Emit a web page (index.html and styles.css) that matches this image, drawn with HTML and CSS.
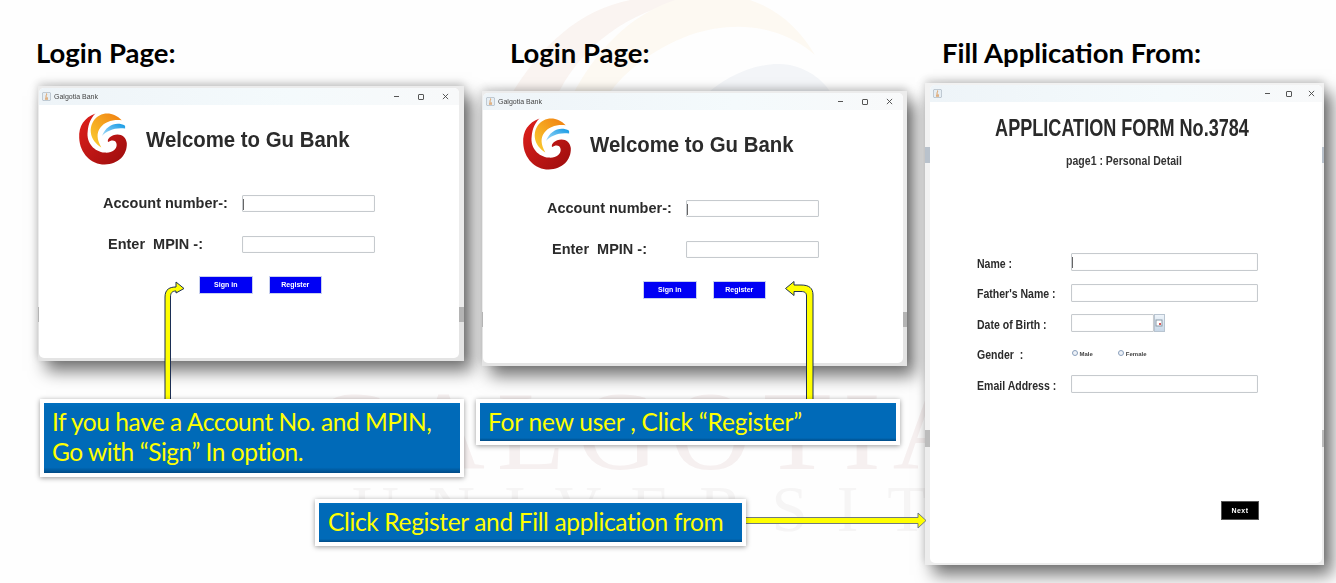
FILE: index.html
```html
<!DOCTYPE html>
<html lang="en">
<head>
<meta charset="utf-8">
<title>Galgotia Bank slide</title>
<link rel="stylesheet" href="styles.css">
</head>
<body>
<main class="slide">
  <svg class="wm-logo" viewBox="0 0 420 120" aria-hidden="true">
    <path d="M8 100C40 45 80 10 130 0L190 0C130 10 80 45 55 100Z" fill="#faf4f1"/>
    <path d="M70 100C95 50 130 15 175 0L250 0C280 10 300 30 315 55C280 25 235 20 190 35C150 50 120 75 105 100Z" fill="#fdf9f2"/>
    <path d="M200 100C225 75 260 60 290 65C310 70 325 80 335 100Z" fill="#f3f5f8"/>
  </svg>
  <div class="wm-text wm-top">GALGOTIAS</div>
  <div class="wm-text wm-bottom">UNIVERSITY</div>

  <h2 class="heading h-a">Login Page:</h2>
  <h2 class="heading h-b">Login Page:</h2>
  <h2 class="heading h-c">Fill Application From:</h2>

  <section class="shot shot-a">
    <div class="win">
      <div class="titlebar">
        <svg class="java" viewBox="0 0 12 12"><rect x=".5" y=".5" width="11" height="11" rx="2" fill="#e6eef4" stroke="#a9b6c0"/><path d="M6 2c1 2-2 3 0 5M4 8h4M4 9.500h4" stroke="#d9822b" fill="none"/></svg>
        <span class="wintitle">Galgotia Bank</span>
        <div class="controls">
          <span class="ctl-min"></span><span class="ctl-max"></span>
          <svg class="ctl-x" viewBox="0 0 8 8"><path d="M1 1l6 6M7 1L1 7" stroke="#444" fill="none"/></svg>
        </div>
      </div>
      <div class="brand">
        <svg class="logo" viewBox="0 0 200 200">
          <defs>
            <linearGradient id="r1" x1="0" y1="0" x2="1" y2="1"><stop offset="0" stop-color="#e0201c"/><stop offset="1" stop-color="#9c0d0d"/></linearGradient>
            <linearGradient id="o1" x1="1" y1="0" x2="0" y2="1"><stop offset="0" stop-color="#f07d10"/><stop offset="1" stop-color="#fbd030"/></linearGradient>
            <linearGradient id="b1" x1="1" y1="0" x2="0" y2="1"><stop offset="0" stop-color="#1298e4"/><stop offset="1" stop-color="#a6dcf8"/></linearGradient>
          </defs>
          <path fill="url(#r1)" d="M78 28C45 40 28 65 30 100C32 145 65 178 105 178C145 178 172 150 170 115C168 95 150 85 130 92C118 97 112 105 115 112C125 105 138 105 140 118C142 135 125 145 105 143C75 140 50 115 55 80C57 58 65 40 78 28Z"/>
          <path fill="url(#o1)" d="M155 48C130 20 90 22 72 50C58 72 60 105 95 128C82 105 80 85 92 70C105 52 130 45 155 48Z"/>
          <path fill="url(#b1)" d="M165 64C140 50 110 62 97 94C112 78 135 68 165 72Z"/>
        </svg>
        <h1 class="welcome">Welcome to Gu Bank</h1>
      </div>
      <div class="login-form">
        <div class="login-row"><label class="login-label">Account number-:</label><div class="field login-field has-caret"></div></div>
        <div class="login-row"><label class="login-label label-mpin">Enter&nbsp; MPIN -:</label><div class="field login-field"></div></div>
        <div class="btn-row"><div class="btn-blue">Sign in</div><div class="btn-blue">Register</div></div>
      </div>
    </div>
  </section>

  <section class="shot shot-b">
    <div class="win">
      <div class="titlebar">
        <svg class="java" viewBox="0 0 12 12"><rect x=".5" y=".5" width="11" height="11" rx="2" fill="#e6eef4" stroke="#a9b6c0"/><path d="M6 2c1 2-2 3 0 5M4 8h4M4 9.500h4" stroke="#d9822b" fill="none"/></svg>
        <span class="wintitle">Galgotia Bank</span>
        <div class="controls">
          <span class="ctl-min"></span><span class="ctl-max"></span>
          <svg class="ctl-x" viewBox="0 0 8 8"><path d="M1 1l6 6M7 1L1 7" stroke="#444" fill="none"/></svg>
        </div>
      </div>
      <div class="brand">
        <svg class="logo" viewBox="0 0 200 200">
          <path fill="url(#r1)" d="M78 28C45 40 28 65 30 100C32 145 65 178 105 178C145 178 172 150 170 115C168 95 150 85 130 92C118 97 112 105 115 112C125 105 138 105 140 118C142 135 125 145 105 143C75 140 50 115 55 80C57 58 65 40 78 28Z"/>
          <path fill="url(#o1)" d="M155 48C130 20 90 22 72 50C58 72 60 105 95 128C82 105 80 85 92 70C105 52 130 45 155 48Z"/>
          <path fill="url(#b1)" d="M165 64C140 50 110 62 97 94C112 78 135 68 165 72Z"/>
        </svg>
        <h1 class="welcome">Welcome to Gu Bank</h1>
      </div>
      <div class="login-form">
        <div class="login-row"><label class="login-label">Account number-:</label><div class="field login-field has-caret"></div></div>
        <div class="login-row"><label class="login-label label-mpin">Enter&nbsp; MPIN -:</label><div class="field login-field"></div></div>
        <div class="btn-row"><div class="btn-blue">Sign in</div><div class="btn-blue">Register</div></div>
      </div>
    </div>
  </section>

  <section class="shot shot-c">
    <div class="win">
      <div class="titlebar">
        <svg class="java" viewBox="0 0 12 12"><rect x=".5" y=".5" width="11" height="11" rx="2" fill="#e6eef4" stroke="#a9b6c0"/><path d="M6 2c1 2-2 3 0 5M4 8h4M4 9.500h4" stroke="#d9822b" fill="none"/></svg>
        <div class="controls controls-c">
          <span class="ctl-min"></span><span class="ctl-max"></span>
          <svg class="ctl-x" viewBox="0 0 8 8"><path d="M1 1l6 6M7 1L1 7" stroke="#444" fill="none"/></svg>
        </div>
      </div>
      <h1 class="form-title">APPLICATION FORM No.3784</h1>
      <p class="form-sub">page1 : Personal Detail</p>
      <div class="app-form">
        <div class="app-row"><label class="app-label">Name :</label><div class="field app-field has-caret"></div></div>
        <div class="app-row"><label class="app-label">Father's Name :</label><div class="field app-field"></div></div>
        <div class="app-row"><label class="app-label">Date of Birth :</label><div class="field date-field"></div>
          <div class="cal-btn"><svg viewBox="0 0 8 8"><rect x="1" y="1" width="6" height="6" fill="#fff" stroke="#8a9aa8"/><rect x="4" y="4" width="2" height="2" fill="#d65a5a"/></svg></div></div>
        <div class="app-row"><label class="app-label">Gender&nbsp; :</label>
          <div class="radios"><span class="radio"></span><span class="radio-text">Male</span><span class="radio radio-second"></span><span class="radio-text">Female</span></div></div>
        <div class="app-row"><label class="app-label">Email Address :</label><div class="field app-field"></div></div>
      </div>
      <div class="next-row"><div class="btn-next">Next</div></div>
    </div>
  </section>

  <svg class="arrow arrow-a" viewBox="0 0 24 122"><path d="M3 120V16C3 8 8 6 14 6V1L22 7.500L14 12V10C10 10 8.500 12 8.500 16V120Z" fill="#ffff00" stroke="#1c2f55" stroke-width="1"/></svg>
  <svg class="arrow arrow-b" viewBox="0 0 32 122"><path d="M29 120V14C29 7 25 4 17 4H10V.500L1.500 7.500L10 14.500V10.500H17C21 10.500 22.500 12 22.500 15V120Z" fill="#ffff00" stroke="#1c2f55" stroke-width="1"/></svg>
  <svg class="arrow arrow-c" viewBox="0 0 186 17"><path d="M1 5.500H177V1L185 8.500L177 16V11.500H1Z" fill="#ffff00" stroke="#6f7a82" stroke-width="1"/></svg>

  <div class="callout co-a"><p>If you have a Account No. and MPIN,<br>Go with “Sign” In option.</p></div>
  <div class="callout co-b"><p>For new user , Click “Register”</p></div>
  <div class="callout co-c"><p>Click Register and Fill application from</p></div>
</main>
</body>
</html>
```
FILE: styles.css
```css
* { box-sizing: border-box; }
html, body { margin: 0; padding: 0; }
body { background: #fefefe; font-family: "Liberation Sans", Arial, sans-serif; }
.slide { position: relative; width: 1336px; height: 583px; overflow: hidden; background: #fefefe; }

.wm-logo { position: absolute; left: 500px; top: 0; width: 420px; height: 120px; }
.wm-text { position: absolute; font-family: "Liberation Serif", serif; white-space: nowrap; }
.wm-top { left: 311px; top: 367px; font-size: 112px; letter-spacing: 12px; color: #f6f0f0; }
.wm-bottom { left: 352px; top: 472px; font-size: 65px; letter-spacing: 29px; color: #f6f5f5; }

.heading { position: absolute; margin: 0; font-family: Lato, "Liberation Sans", sans-serif; font-weight: 700; font-size: 27.500px; line-height: 30px; color: #000; white-space: nowrap; }
.h-a { left: 36px; top: 38px; }
.h-b { left: 510px; top: 38px; }
.h-c { left: 942px; top: 38px; }

.shot { position: absolute; padding: 2px 5px 3px 1px; box-shadow: 8px 10px 16px rgba(0,0,0,.55), 0 -3px 8px rgba(0,0,0,.18); background: linear-gradient(#ececec 0 221px, #b4b4b4 221px 236px, #e4e4e4 236px); }
.shot-a { left: 38px; top: 86px; width: 426px; height: 275px; }
.shot-b { left: 482px; top: 91px; width: 425px; height: 275px; padding-right: 4px; }
.shot-c { left: 925px; top: 83px; width: 399px; height: 482px; padding: 2px 2px 2px 5px; background: linear-gradient(#f2f2f2 0 64px, #b9c2cc 64px 80px, #f2f2f2 80px 347px, #bcbcbc 347px 364px, #ededed 364px); }

.win { height: 100%; background: #fff; border-radius: 5px; display: flex; flex-direction: column; overflow: hidden; filter: blur(.25px); }
.titlebar { height: 17px; flex: none; display: flex; align-items: center; padding-left: 3px; background: linear-gradient(90deg, #eef4f8, #f4fafc 60%, #f8f9fa); }
.java { width: 9px; height: 9px; flex: none; }
.wintitle { margin-left: 3px; font-size: 7px; color: #444; }
.controls { margin-left: auto; display: flex; align-items: center; width: 66px; padding-left: 1px; justify-content: space-between; padding-right: 10px; }
.controls-c { width: 58px; padding-right: 7px; }
.ctl-min { width: 5px; height: 1px; background: #555; }
.ctl-max { width: 6px; height: 6px; border: 1px solid #555; border-radius: 1px; }
.ctl-x { width: 7px; height: 7px; }

.brand { height: 70px; flex: none; display: flex; align-items: center; padding-left: 30px; }
.logo { width: 68px; height: 68px; flex: none; margin-top: -4px; }
.welcome { margin: 0 0 0 9px; font-size: 22px; line-height: 26px; font-weight: 700; color: #2b2b2b; white-space: nowrap; transform: scaleX(.927); transform-origin: left center; }

.login-form { padding-top: 20px; display: flex; flex-direction: column; gap: 24px; }
.login-row { display: flex; align-items: center; height: 17px; }
.login-label { width: 203px; padding-left: 64px; font-size: 15.500px; font-weight: 700; color: #2b2b2b; white-space: pre; position: relative; top: -1px; transform: scaleX(.935); transform-origin: 64px center; }
.label-mpin { padding-left: 69px; transform-origin: 69px center; }
.field { background: #fff; border: 1px solid #c6cace; box-shadow: inset 0 0 1px #ddd; border-radius: 1px; flex: none; }
.login-field { width: 133px; height: 17px; }
.has-caret { position: relative; }
.has-caret::before { content: ""; position: absolute; left: 0; top: 3px; width: 1px; height: 11px; background: #666; }
.btn-row { display: flex; gap: 16px; padding-left: 160px; margin-top: -1px; }
.btn-blue { width: 53.500px; height: 17.500px; background: #0000f5; border: 1px solid #c8d0f0; color: #fff; font-size: 7px; font-weight: 700; display: flex; align-items: center; justify-content: center; }

.form-title { margin: 12px 8px 0 0; text-align: center; font-size: 23px; line-height: 28px; font-weight: 700; color: #2a2a2a; white-space: nowrap; transform: scaleX(.786); }
.form-sub { margin: 11px 4px 0 0; text-align: center; font-size: 13px; line-height: 16px; font-weight: 700; color: #333; transform: scaleX(.81); }
.app-form { padding: 84px 0 0 47px; display: flex; flex-direction: column; gap: 12.500px; }
.app-row { display: flex; align-items: center; height: 18px; }
.app-label { width: 93.500px; flex: none; font-size: 13px; font-weight: 700; color: #2b2b2b; white-space: nowrap; transform: scaleX(.81); transform-origin: left center; position: relative; top: 1px; }
.app-field { width: 187px; height: 18px; }
.date-field { width: 83px; height: 18px; }
.cal-btn { width: 11px; height: 18px; background: linear-gradient(#eef4fa, #c8d8e8); border: 1px solid #b8c4d0; display: flex; align-items: center; justify-content: center; }
.cal-btn svg { width: 8px; height: 8px; }
.radios { display: flex; align-items: center; }
.radio { width: 6px; height: 6px; border-radius: 50%; border: 1px solid #8aa0bc; background: #eef2f8; margin-left: 1px; position: relative; top: -1px; }
.radio-second { margin-left: 25px; }
.radio-text { margin-left: 2px; font-size: 6px; font-weight: 700; color: #444; }
.next-row { display: flex; padding: 108px 0 0 291px; }
.btn-next { width: 38px; height: 19px; background: #000; border: 1px solid #555; color: #fff; font-size: 7px; font-weight: 700; letter-spacing: .5px; display: flex; align-items: center; justify-content: center; }

.arrow { position: absolute; overflow: visible; }
.arrow-a { left: 162px; top: 281px; width: 24px; height: 122px; }
.arrow-b { left: 784px; top: 281px; width: 32px; height: 122px; }
.arrow-c { left: 741px; top: 512px; width: 186px; height: 17px; }

.callout { position: absolute; background: linear-gradient(#0070c0 0, #006ab8 6%, #006ab8 92%, #004a85 100%); border: 4px solid #fff; box-shadow: 0 1px 5px rgba(0,0,0,.4); display: flex; }
.callout p { margin: 0; font-family: Lato, "Liberation Sans", sans-serif; color: #ffff00; font-size: 24.500px; line-height: 30px; white-space: nowrap; letter-spacing: -.35px; }
.co-a { left: 40px; top: 399px; width: 424px; height: 78px; padding: 4px 0 0 8px; }
.co-a p { letter-spacing: -.45px; }
.co-b { left: 476px; top: 399px; width: 424px; height: 46px; padding: 4px 0 0 8px; }
.co-b p { letter-spacing: -.2px; }
.co-c { left: 315px; top: 499px; width: 431px; height: 47px; padding: 4px 0 0 9px; }
```
